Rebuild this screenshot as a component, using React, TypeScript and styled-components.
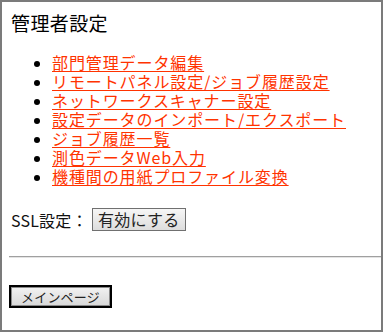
import React from "react";
import styled, { createGlobalStyle } from "styled-components";

const GlobalStyle = createGlobalStyle`
  html, body { margin: 0; padding: 0; background: #ffffff; }
`;

const FONT = `"Noto Sans CJK JP", "Noto Sans", sans-serif`;

const Frame = styled.div`
  width: 383px;
  height: 332px;
  box-sizing: border-box;
  border: 2px solid #7b7b7b;
  padding: 0 0 0 7px;
  font-family: ${FONT};
  color: #111;
  overflow: hidden;
`;

const Title = styled.h1`
  margin: 10px 0 0 0;
  font-size: 19px;
  line-height: 22px;
  font-weight: 400;
  letter-spacing: 0.4px;
  color: #000;
  padding-left: 2px;
`;

const MenuList = styled.ul`
  margin: 19px 0 0 0;
  padding: 0 0 0 43px;
  list-style: disc;
`;

const MenuItem = styled.li`
  font-size: 16px;
  line-height: 19px;
  letter-spacing: 0.9px;
  color: #000;
  &::marker { font-size: 15px; }
`;

const MenuLink = styled.a`
  color: #ff3300;
  text-decoration: underline;
  text-underline-offset: 2px;
  text-decoration-thickness: 1px;
`;

const SslRow = styled.div`
  display: flex;
  align-items: center;
  gap: 4px;
  margin-top: 22px;
  height: 23px;
  padding-left: 2px;
`;

const SslLabel = styled.span`
  font-size: 16px;
  letter-spacing: 0.2px;
  color: #111;
`;

const EnableButton = styled.button`
  box-sizing: border-box;
  width: 94px;
  height: 23px;
  padding: 0;
  border: 1px solid #707070;
  border-radius: 0;
  background: linear-gradient(#f6f6f6, #dddddd);
  font-family: ${FONT};
  font-size: 16px;
  line-height: 21px;
  color: #222;
  letter-spacing: 0.3px;
`;

const Rule = styled.hr`
  margin: 25px 0 0 0;
  height: 0;
  border: 0;
  border-top: 1px solid #a0a0a0;
  border-bottom: 1px solid #e4e4e4;
`;

const MainButton = styled.button`
  display: block;
  box-sizing: border-box;
  margin-top: 27px;
  width: 103px;
  height: 23px;
  padding: 0;
  border: 2px solid #000;
  outline: none;
  box-shadow: inset 0 0 0 1px #8a8a8a;
  border-radius: 0;
  background: linear-gradient(#f2f2f2, #d8d8d8);
  font-family: ${FONT};
  font-size: 13px;
  line-height: 17px;
  color: #222;
  letter-spacing: 0.2px;
`;

const items = [
  "部門管理データ編集",
  "リモートパネル設定/ジョブ履歴設定",
  "ネットワークスキャナー設定",
  "設定データのインポート/エクスポート",
  "ジョブ履歴一覧",
  "測色データWeb入力",
  "機種間の用紙プロファイル変換",
];

export default function App() {
  return (
    <>
      <GlobalStyle />
      <Frame>
        <Title>管理者設定</Title>
        <MenuList>
          {items.map((t) => (
            <MenuItem key={t}>
              <MenuLink href="#">{t}</MenuLink>
            </MenuItem>
          ))}
        </MenuList>
        <SslRow>
          <SslLabel>SSL設定：</SslLabel>
          <EnableButton>有効にする</EnableButton>
        </SslRow>
        <Rule />
        <MainButton>メインページ</MainButton>
      </Frame>
    </>
  );
}
